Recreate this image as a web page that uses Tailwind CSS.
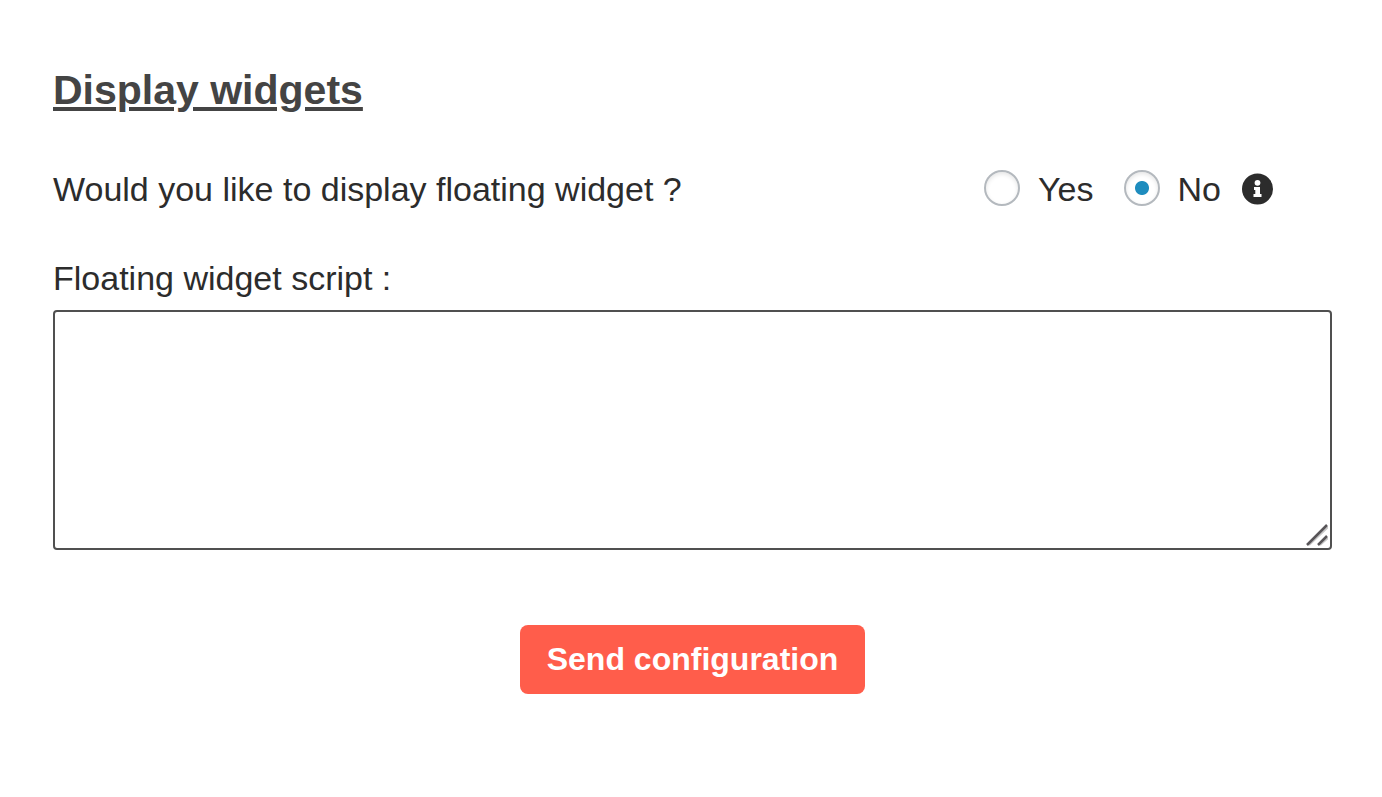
<!DOCTYPE html>
<html lang="en">
<head>
<meta charset="utf-8">
<title>Display widgets</title>
<script src="https://cdn.jsdelivr.net/npm/@tailwindcss/browser@4"></script>
</head>
<body class="bg-white font-['Liberation_Sans',Arial,sans-serif] text-[34px] leading-10 text-[#2c2c2c]">
<main class="pt-[66px] pb-12 pl-[53px] pr-[50px]">
  <h1 class="text-[41px] leading-12 font-bold text-[#444] underline decoration-4 underline-offset-3">Display widgets</h1>
  <form class="mt-[53px]">
    <div role="radiogroup" aria-labelledby="question" class="flex items-center justify-between pr-[59px]">
      <span id="question" class="pt-[2px]">Would you like to display floating widget ?</span>
      <div class="flex items-center">
        <label class="flex items-center gap-[18px]">
          <input type="radio" name="floating" class="size-9 appearance-none rounded-full border-2 border-[#b4b9be] bg-white shadow-[inset_0_2px_4px_rgba(0,0,0,0.1)] checked:bg-[radial-gradient(circle,#1e8cbe_6.5px,transparent_7.5px)]">
          <span class="pt-[2px]">Yes</span>
        </label>
        <label class="ml-[30px] flex items-center gap-[18px]">
          <input type="radio" name="floating" checked class="size-9 appearance-none rounded-full border-2 border-[#b4b9be] bg-white shadow-[inset_0_2px_4px_rgba(0,0,0,0.1)] checked:bg-[radial-gradient(circle,#1e8cbe_6.5px,transparent_7.5px)]">
          <span class="pt-[2px]">No</span>
        </label>
        <svg class="ml-5 size-8 overflow-visible" viewBox="0 0 32 32" role="img" aria-label="Information"><circle cx="16.500" cy="17" r="15.500" fill="#2c2c2c"/><circle cx="16.500" cy="10.800" r="2.900" fill="#fff"/><path fill="#fff" d="M13 15h6v7h1.500v3h-8v-3h1.800v-4H13z"/></svg>
      </div>
    </div>
    <label for="script" class="mt-[49px] block">Floating widget script :</label>
    <div class="relative mt-3">
      <textarea id="script" class="block h-60 w-full resize-none rounded-[4px] border-2 border-[#505050] bg-white p-2"></textarea>
      <svg class="pointer-events-none absolute right-1 bottom-1 size-[22px]" viewBox="0 0 22 22" fill="none" aria-hidden="true"><path stroke="#c8c8c8" stroke-width="2" d="M3 21 22 3M14 21l8-7"/><path stroke="#585558" stroke-width="2.500" d="M1 21 21 1M12 21l9-9"/></svg>
    </div>
    <div class="mt-[75px] flex justify-center">
      <button type="button" class="rounded-lg bg-[#ff5d4b] px-[27px] pt-[14px] pb-[15px] text-[32px] leading-10 font-bold text-white">Send configuration</button>
    </div>
  </form>
</main>
</body>
</html>
